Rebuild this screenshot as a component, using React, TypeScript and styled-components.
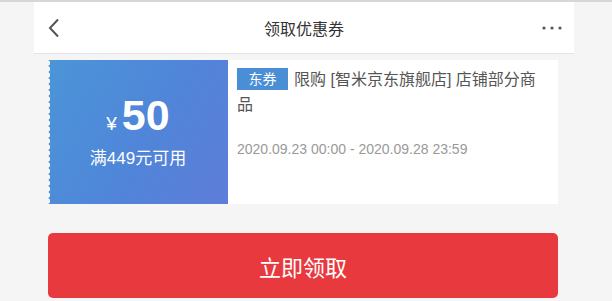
import styled, { createGlobalStyle } from "styled-components";

const GlobalStyle = createGlobalStyle`
  html, body {
    margin: 0;
    padding: 0;
    background: #f5f5f5;
    font-family: "Liberation Sans", "Noto Sans CJK SC", sans-serif;
  }
  body {
    border-top: 2px solid #d6d6d6;
  }
`;

const Page = styled.div`
  width: 540px;
  margin-left: 34px;
`;

const Header = styled.header`
  height: 51px;
  background: #fff;
  border-bottom: 1px solid #e6e6e6;
  display: grid;
  grid-template-columns: 60px 1fr 60px;
  align-items: center;
`;

const BackButton = styled.div`
  display: flex;
  align-items: center;
  padding-left: 14px;
`;

const HeaderTitle = styled.h1`
  margin: 0;
  font-size: 16px;
  font-weight: normal;
  color: #333;
  text-align: center;
`;

const MoreButton = styled.div`
  display: flex;
  justify-content: flex-end;
  padding-right: 12px;
`;

const Content = styled.main`
  padding: 6px 16px 0 14px;
`;

const Coupon = styled.section`
  display: flex;
  height: 144px;
  background: #fff;
`;

const Amount = styled.div`
  position: relative;
  width: 180px;
  flex-shrink: 0;
  background: linear-gradient(120deg, #4b95d8 0%, #5085d9 55%, #5e7dd9 100%);
  color: #fff;
  display: flex;
  flex-direction: column;
  align-items: center;
  justify-content: center;

  /* perforated left edge */
  &::before {
    content: "";
    position: absolute;
    left: -1px;
    top: 0;
    bottom: 0;
    width: 6px;
    background: radial-gradient(circle at 0 50%, #f5f5f5 2.8px, transparent 3.4px);
    background-size: 6px 6px;
  }
`;

const Price = styled.div`
  display: flex;
  align-items: baseline;
  margin-top: -4px;
`;

const Yen = styled.span`
  font-size: 19px;
  margin-right: 5px;
`;

const Value = styled.span`
  font-size: 43px;
  font-weight: bold;
  line-height: 48px;
`;

const Condition = styled.div`
  font-size: 17px;
  margin-top: 5px;
`;

const Info = styled.div`
  flex: 1;
  padding: 7px 10px 0 9px;
`;

const Title = styled.p`
  margin: 0;
  font-size: 16px;
  line-height: 25px;
  color: #555;
`;

const Tag = styled.span`
  display: inline-block;
  width: 51px;
  height: 22px;
  line-height: 22px;
  margin-right: 6px;
  background: #4a8fd6;
  color: #fff;
  font-size: 14px;
  text-align: center;
  vertical-align: 1px;
`;

const Period = styled.div`
  margin-top: 24px;
  font-size: 14px;
  color: #999;
`;

const ClaimButton = styled.button`
  display: block;
  width: 100%;
  height: 65px;
  margin-top: 29px;
  border: none;
  border-radius: 5px;
  background: #e83a3e;
  color: #fff;
  font-family: inherit;
  font-size: 22px;
`;

const App = () => {
  return (
    <Page>
      <GlobalStyle />
      <Header>
        <BackButton>
          <svg width="12" height="20" viewBox="0 0 12 20">
            <path d="M10 1.5 L2 10 L10 18.5" fill="none" stroke="#555" strokeWidth="2" />
          </svg>
        </BackButton>
        <HeaderTitle>领取优惠券</HeaderTitle>
        <MoreButton>
          <svg width="20" height="4" viewBox="0 0 20 4">
            <circle cx="2" cy="2" r="1.6" fill="#555" />
            <circle cx="10" cy="2" r="1.6" fill="#555" />
            <circle cx="18" cy="2" r="1.6" fill="#555" />
          </svg>
        </MoreButton>
      </Header>
      <Content>
        <Coupon>
          <Amount>
            <Price>
              <Yen>¥</Yen>
              <Value>50</Value>
            </Price>
            <Condition>满449元可用</Condition>
          </Amount>
          <Info>
            <Title>
              <Tag>东券</Tag>限购 [智米京东旗舰店] 店铺部分商品
            </Title>
            <Period>2020.09.23 00:00 - 2020.09.28 23:59</Period>
          </Info>
        </Coupon>
        <ClaimButton>立即领取</ClaimButton>
      </Content>
    </Page>
  );
};

export default App;
